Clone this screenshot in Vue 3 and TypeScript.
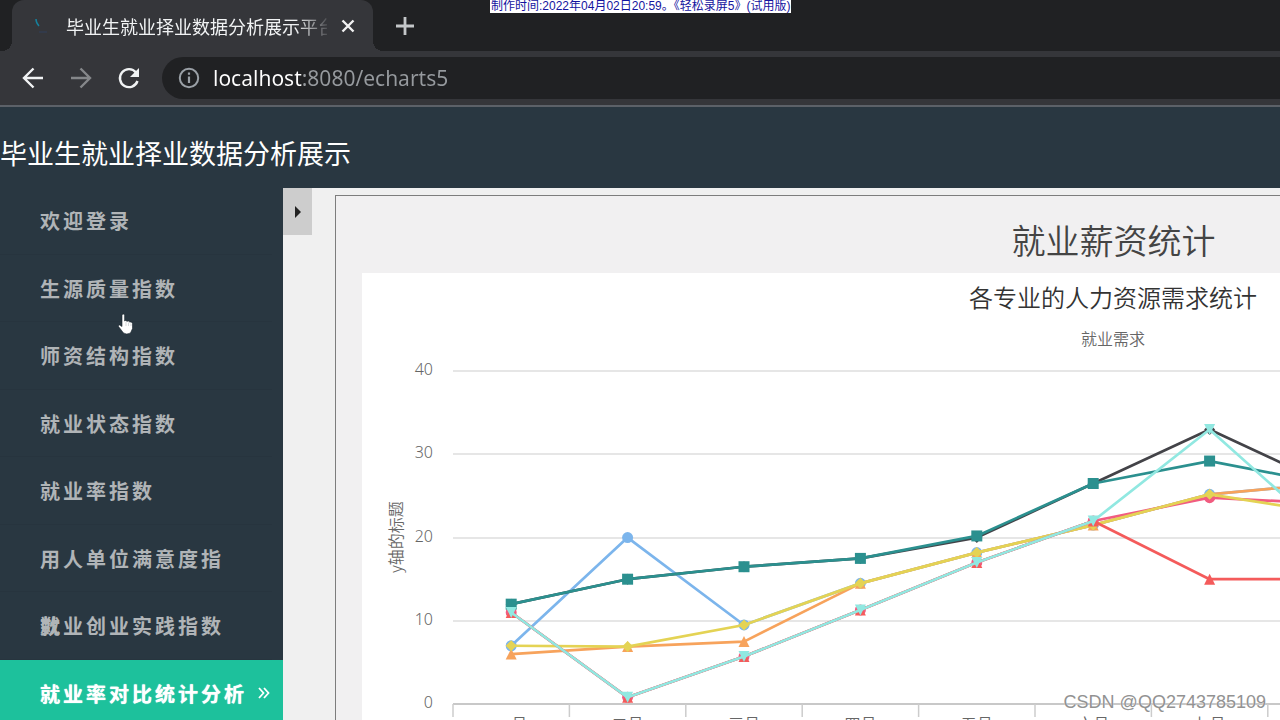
<script setup lang="ts">
import { ref } from 'vue'

type Shape = 'circle' | 'diamond' | 'square' | 'up' | 'down'
interface Series {
  color: string
  shape: Shape
  values: number[]
}

const address = ref('localhost:8080/echarts5')

const menu = [
  '欢迎登录',
  '生源质量指数',
  '师资结构指数',
  '就业状态指数',
  '就业率指数',
  '用人单位满意度指数',
  '就业创业实践指数',
  '就业率对比统计分析',
]
const active = ref(7)

const months = ['一月', '二月', '三月', '四月', '五月', '六月', '七月', '八月', '九月', '十月', '十一月', '十二月']
const ticks = [0, 10, 20, 30, 40]

const series: Series[] = [
  { color: '#7cb5ec', shape: 'circle', values: [7, 20, 9.5, 14.5, 18.2, 21.5, 25.2, 26.5] },
  { color: '#434348', shape: 'diamond', values: [12, 15, 16.5, 17.5, 20, 26.5, 33, 26.5] },
  { color: '#f7a35c', shape: 'up', values: [6, 6.9, 7.5, 14.5, 18.2, 21.5, 25.2, 26.5] },
  { color: '#f15c80', shape: 'circle', values: [11, 0.8, 5.7, 11.3, 17, 22, 24.8, 24.1] },
  { color: '#e4d354', shape: 'diamond', values: [7, 6.9, 9.5, 14.5, 18.2, 21.5, 25.2, 23] },
  { color: '#2b908f', shape: 'square', values: [12, 15, 16.5, 17.5, 20.2, 26.5, 29.2, 26.5] },
  { color: '#f45b5b', shape: 'up', values: [11, 0.8, 5.7, 11.3, 17, 22, 15, 15] },
  { color: '#91e8e1', shape: 'down', values: [11, 0.8, 5.7, 11.3, 17, 22, 33, 20.5] },
]

const left = 91
const step = 116.4
const baseY = 431
const px = (i: number) => left + step * (i + 0.5)
const py = (v: number) => baseY - v * 8.32

const linePath = (s: Series) => s.values.map((v, i) => `${i ? 'L' : 'M'}${px(i)} ${py(v)}`).join('')

const markerPath = (shape: Shape, x: number, y: number) => {
  const r = 5.5
  switch (shape) {
    case 'circle':
      return `M${x - r} ${y}a${r} ${r} 0 1 0 ${2 * r} 0a${r} ${r} 0 1 0 ${-2 * r} 0z`
    case 'diamond':
      return `M${x} ${y - r}l${r} ${r}l${-r} ${r}l${-r} ${-r}z`
    case 'square':
      return `M${x - r} ${y - r}h${2 * r}v${2 * r}h${-2 * r}z`
    case 'up':
      return `M${x} ${y - r}l${r} ${2 * r}h${-2 * r}z`
    default:
      return `M${x - r} ${y - r}h${2 * r}l${-r} ${2 * r}z`
  }
}
</script>

<template>
  <div class="window">
    <div class="tabstrip">
      <div class="tab">
        <svg class="favicon" width="16" height="16" viewBox="0 0 16 16" aria-hidden="true">
          <path d="M2 1Q2 5 5 8" fill="none" stroke="#16809c" stroke-width="1.5" />
          <path d="M5 14h8" stroke="#303e5a" stroke-width="1" />
        </svg>
        <span class="tab-title">毕业生就业择业数据分析展示平台</span>
        <button class="icon-btn close" aria-label="关闭标签页">
          <svg width="16" height="16" viewBox="0 0 16 16"><path d="M2.500 2.500l11 11M13.500 2.500l-11 11" stroke="#f1f1f1" stroke-width="2.400" /></svg>
        </button>
      </div>
      <button class="icon-btn add" aria-label="新标签页">
        <svg width="20" height="20" viewBox="0 0 20 20"><path d="M10 1v18M1 10h18" stroke="#c4c7c9" stroke-width="2.800" /></svg>
      </button>
    </div>

    <div class="toolbar">
      <button class="icon-btn" aria-label="后退">
        <svg width="24" height="24" viewBox="0 0 24 24" fill="none" stroke="#f1f3f4" stroke-width="2.400"><path d="M22 12H3M12.500 2.500L3 12l9.500 9.500" /></svg>
      </button>
      <button class="icon-btn" aria-label="前进">
        <svg width="24" height="24" viewBox="0 0 24 24" fill="none" stroke="#85878a" stroke-width="2.400"><path d="M2 12h19M11.500 2.500L21 12l-9.500 9.500" /></svg>
      </button>
      <button class="icon-btn" aria-label="重新加载">
        <svg width="24" height="24" viewBox="0 0 24 24"><path d="M19 6.500A9 9 0 1 0 20.500 15" fill="none" stroke="#f1f3f4" stroke-width="2.400" /><path d="M22 2v9h-9z" fill="#f1f3f4" /></svg>
      </button>
      <label class="omnibox">
        <svg width="22" height="22" viewBox="0 0 22 22" aria-hidden="true"><circle cx="11" cy="11" r="9.200" fill="none" stroke="#9aa0a6" stroke-width="2" /><path d="M11 9.500v6.500M11 5.500v2.300" stroke="#9aa0a6" stroke-width="2.200" /></svg>
        <input v-model="address" type="text" aria-label="地址" spellcheck="false" />
      </label>
    </div>

    <header class="banner"><h1>毕业生就业择业数据分析展示</h1></header>

    <div class="body">
      <nav class="sidebar">
        <a
          v-for="(item, i) in menu"
          :key="item"
          href="#"
          :class="{ active: i === active }"
          @click.prevent="active = i"
        >{{ item }}<svg v-if="i === active" width="14" height="14" viewBox="0 0 14 14" aria-hidden="true"><path d="M2 2l4.500 5L2 12M7 2l4.500 5L7 12" fill="none" stroke="#fff" stroke-width="1.800" /></svg></a>
      </nav>
      <button class="toggle" aria-label="展开侧栏">
        <svg width="8" height="12" viewBox="0 0 8 12"><path d="M1 0l6 6l-6 6z" fill="#222" /></svg>
      </button>
      <main class="content">
        <section class="frame">
          <h2>就业薪资统计</h2>
          <svg class="chart" width="1503" height="500" role="img" aria-label="各专业的人力资源需求统计">
            <text class="title" x="751" y="34" text-anchor="middle">各专业的人力资源需求统计</text>
            <text class="label" x="751" y="72" text-anchor="middle">就业需求</text>
            <text class="label" transform="translate(40 264) rotate(-90)" text-anchor="middle">y轴的标题</text>
            <g v-for="t in ticks" :key="t">
              <path :d="`M${left} ${Math.round(py(t))}H1489`" :stroke="t ? '#dedede' : '#c8c8c8'" :stroke-width="t ? 1.4 : 2" />
              <text class="label" x="71" :y="Math.round(py(t)) + 4" text-anchor="end">{{ t }}</text>
            </g>
            <g v-for="(m, i) in months" :key="m">
              <path :d="`M${left + step * i} ${baseY}v13`" stroke="#ccc" stroke-width="1.500" />
              <text class="label" :x="px(i)" y="457" text-anchor="middle">{{ m }}</text>
            </g>
            <g v-for="s in series" :key="s.color">
              <path :d="linePath(s)" fill="none" :stroke="s.color" stroke-width="2.700" stroke-linejoin="round" />
              <path v-for="(v, i) in s.values" :key="i" :d="markerPath(s.shape, px(i), py(v))" :fill="s.color" />
            </g>
          </svg>
        </section>
      </main>
    </div>

    <div class="recorder">制作时间:2022年04月02日20:59。《轻松录屏5》(试用版)</div>
    <div class="credit">CSDN @QQ2743785109</div>
    <svg class="pointer" width="18" height="22" viewBox="0 0 18 22" aria-hidden="true">
      <path d="M5 2.500Q5 1 6.300 1T7.600 2.500V8l1-.5 1.400.8 1.500-.2 1.300 1 1.500-.1 1.200 1.500v5l-2 4.500q-4 2-7 0L1.500 13.500Q1 12 2.500 12L5 13.500z" fill="#fff" stroke="#18242c" stroke-width=".6" />
      <path d="M9 9v4M11.500 9.500v3.500M14 10.500V13" stroke="#b9c0c4" stroke-width=".6" />
    </svg>
  </div>
</template>

<style>
body {
  margin: 0;
  overflow: hidden;
}
</style>

<style scoped>
.window {
  position: relative;
  display: flex;
  flex-direction: column;
  height: 100vh;
  overflow: hidden;
  font-family: "Noto Sans", "Noto Sans CJK SC", sans-serif;
  background: #f0f0f0;
}
.icon-btn {
  display: flex;
  padding: 0;
  border: 0;
  background: none;
}
.tabstrip {
  display: flex;
  align-items: center;
  height: 51px;
  padding-left: 12px;
  background: #202123;
  flex: none;
}
.tab {
  position: relative;
  box-sizing: border-box;
  display: flex;
  align-items: center;
  width: 361px;
  height: 51px;
  padding: 0 17px 0 22px;
  border-radius: 12px 12px 0 0;
  background: #35363a;
  color: #f1f3f4;
}
.tab::before,
.tab::after {
  content: "";
  position: absolute;
  bottom: 0;
  width: 10px;
  height: 10px;
}
.tab::before {
  right: 100%;
  background: radial-gradient(circle at 0 0, transparent 10px, #35363a 10px);
}
.tab::after {
  left: 100%;
  background: radial-gradient(circle at 100% 0, transparent 10px, #35363a 10px);
}
.favicon {
  margin-right: 16px;
  flex: none;
}
.tab-title {
  flex: 1;
  overflow: hidden;
  white-space: nowrap;
  font: 18px/24px "Noto Sans CJK SC", sans-serif;
  mask-image: linear-gradient(to right, #000 88%, transparent 102%);
}
.close {
  margin-left: 13px;
}
.add {
  margin-left: 22px;
}
.toolbar {
  display: flex;
  align-items: center;
  gap: 24px;
  height: 54px;
  padding-left: 21px;
  background: #35363a;
  border-bottom: 2px solid #5c6168;
  flex: none;
}
.omnibox {
  display: flex;
  align-items: center;
  gap: 13px;
  flex: 1;
  height: 42px;
  margin-left: -3px;
  padding-left: 16px;
  border-radius: 21px 0 0 21px;
  background: #202123;
}
.omnibox input {
  flex: 1;
  padding: 0;
  border: 0;
  outline: 0;
  font: 21px/30px "Noto Sans", sans-serif;
  color: transparent;
  background: linear-gradient(to right, #fff 89px, #969a9e 89px);
  background-clip: text;
}
.banner {
  display: flex;
  align-items: center;
  height: 81px;
  background: #293741;
  flex: none;
}
.banner h1 {
  margin: 10px 0 0;
  font: 400 27px/40px "Noto Sans CJK SC", sans-serif;
  color: #fff;
}
.body {
  display: flex;
  align-items: flex-start;
  flex: 1;
  min-height: 0;
}
.sidebar {
  display: grid;
  grid-template-rows: repeat(8, 1fr);
  width: 283px;
  height: 540px;
  margin-top: -1px;
  background: #293741;
  flex: none;
}
.sidebar a {
  min-height: 0;
  padding: 0 50px 0 40px;
  font: 700 20px/67px "Noto Sans CJK SC", sans-serif;
  letter-spacing: 3px;
  color: #b0b4b7;
  text-decoration: none;
  background: linear-gradient(#27343e, #27343e) left bottom / 272px 1px no-repeat;
}
.sidebar a.active {
  display: flex;
  align-items: center;
  justify-content: space-between;
  padding-right: 12px;
  background: #1dc19c;
  color: #fff;
  text-shadow: 0 0 1px #fff;
  white-space: nowrap;
}
.toggle {
  display: flex;
  align-items: center;
  justify-content: center;
  width: 29px;
  height: 47px;
  padding: 0;
  border: 0;
  background: #cdcdcd;
  flex: none;
}
.content {
  flex: 1;
  min-width: 0;
  align-self: stretch;
  overflow: hidden;
  padding: 7px 0 0 23px;
}
.frame {
  width: max-content;
  padding: 0 26px;
  border: 1px solid #7d7d7d;
  background: #f1f0f1;
}
.frame h2 {
  margin: 0;
  padding: 19px 0 8px;
  font: 350 34px/50px "Noto Sans CJK SC", sans-serif;
  color: #444;
  text-align: center;
}
.chart {
  display: block;
  background: #fff;
}
.title {
  font: 350 24px "Noto Sans CJK SC", sans-serif;
  fill: #333;
}
.label {
  font: 350 16px "Noto Sans", "Noto Sans CJK SC", sans-serif;
  fill: #666;
}
.recorder {
  position: absolute;
  top: 0;
  left: 490px;
  padding: 0 1px;
  background: #fff;
  color: #1414a0;
  font: 12px/13px "Liberation Sans", "Noto Sans CJK SC", sans-serif;
  white-space: nowrap;
}
.credit {
  position: absolute;
  right: 14px;
  bottom: 7px;
  font: 18px/22px "Liberation Sans", sans-serif;
  color: #929292;
  text-shadow: 0 0 1px #fff;
}
.pointer {
  position: absolute;
  left: 117px;
  top: 313px;
}
</style>
